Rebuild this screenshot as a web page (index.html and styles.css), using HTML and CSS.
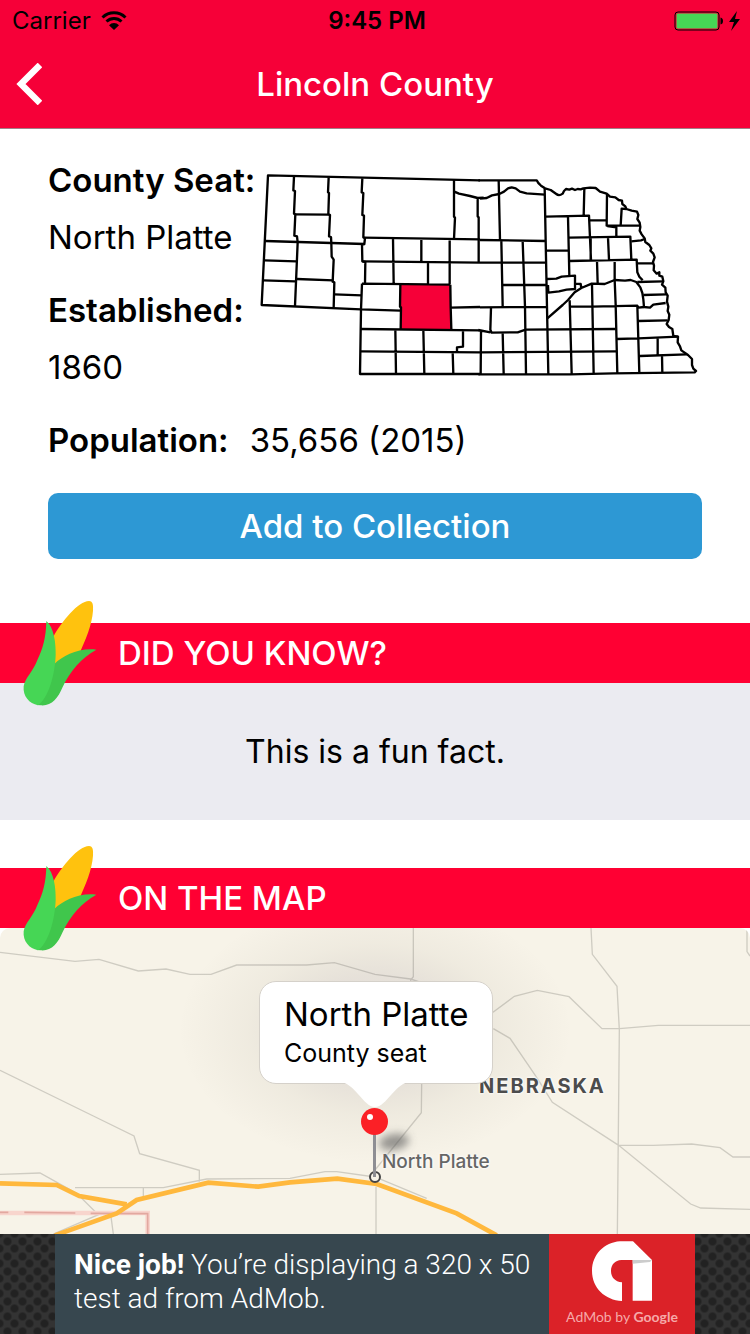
FILE: index.html
```html
<!DOCTYPE html>
<html lang="en">
<head>
  <meta charset="utf-8">
  <meta name="viewport" content="width=device-width">
  <title>Lincoln County</title>
  <link rel="stylesheet" href="styles.css">
</head>
<body>
  <svg class="defs" aria-hidden="true">
    <symbol id="corn" viewBox="66 30 225 318">
      <path fill="#ffc20e" d="M160 140C185 95 235 33 267 33C279 34 280 45 279 62C276 105 256 150 242 182L210 235L150 250Z"/>
      <path fill="#40c64c" d="M110 345C130 300 148 245 163 222C190 197 235 173 289 179C245 203 211 242 188 291C174 325 154 349 122 346Z"/>
      <path fill="#46d655" d="M139 93C162 112 168 160 167 195C165 255 145 325 114 346C88 341 68 319 71 289C76 262 99 246 113 208C128 175 138 145 139 93Z"/>
    </symbol>
  </svg>

  <header class="header">
    <div class="status-bar">
      <div class="carrier">
        <span>Carrier</span>
        <svg class="wifi" viewBox="0 0 26 20" aria-hidden="true">
          <path d="M1.500 6.500A16.500 16.500 0 0 1 24.500 6.500M5.500 10.500A11 11 0 0 1 20.500 10.500" fill="none" stroke="#000" stroke-width="3"/>
          <path d="M8 14.200A7 7 0 0 1 18 14.200L13 19Z"/>
        </svg>
      </div>
      <span class="time">9:45 PM</span>
      <div class="battery">
        <svg viewBox="0 0 68 20" width="68" height="20" aria-hidden="true">
          <rect x="1" y="1" width="44" height="18" rx="3" fill="none" stroke="#000"/>
          <rect x="2.500" y="2.500" width="41" height="15" rx="1" fill="#46d655"/>
          <path d="M46.500 6.500Q49 7 49 10T46.500 13.500Z"/>
          <path d="M63 0L55 11H60L57 20L66 8H61Z"/>
        </svg>
      </div>
    </div>
    <nav class="nav-bar">
      <button class="back" type="button" aria-label="Back">
        <svg viewBox="0 0 26 42" width="26" height="42" aria-hidden="true">
          <path d="M24 2L5 21L24 40" fill="none" stroke="#fff" stroke-width="6.500"/>
        </svg>
      </button>
      <h1>Lincoln County</h1>
    </nav>
  </header>

  <main>
    <section class="info">
      <div class="info-top">
        <dl class="facts">
          <dt>County Seat:</dt>
          <dd>North Platte</dd>
          <dt>Established:</dt>
          <dd>1860</dd>
        </dl>
        <svg class="state-map" viewBox="9 -15 1332 660" role="img" aria-label="Lincoln County in Nebraska">
          <path class="selected" d="M436 359H586L588 492H437Z"/>
          <g class="borders">
            <!-- west -->
            <path d="M675 46L39 31L20 420L318 433L315 627H675"/>
            <path d="M117 35L115 76L120 78L117 146L121 148L118 212L126 214L128 232L120 423"/>
            <path d="M221 37L219 82L222 84L220 147L225 150L222 214L228 216L229 235L230 275L236 284L233 350L238 352L236 428"/>
            <path d="M322 40L320 82L325 84L322 150L327 152L325 217L330 219L328 237L321 238L322 289L331 291L330 356"/>
            <path d="M121 148L222 149M31 228L328 237M28 286L124 289M25 346L121 349M126 342L235 346M238 388L320 391"/>
            <path d="M325 218L675 223M322 289L675 293M414 220L416 355M499 222V292M584 223L584 358M519 293V357M321 356L586 359M321 356L318 433L436 437"/>
            <path d="M436 359L435 425L438 427L437 492M586 359L587 427L589 492M587 428L675 426"/>
            <path d="M318 492L675 496M318 559L675 562M421 493L423 627M505 494L508 627M593 562L595 627M624 495V545L606 547V562"/>
            <path d="M597 45V155L600 158L597 222M598 80L612 86L645 93L668 99L686 98M668 99V154L671 157V293"/>
          </g>
          <g class="borders" transform="translate(675 0)">
            <!-- east -->
            <path d="M-5 46H170Q174 55 183 62L195 70L212 75L229 87Q237 94 248 86L252 78L258 72L268 74L276 71L285 75L293 72L302 73L310 70L330 68L347 69L360 80L380 86L390 95L406 97L416 105L426 107L427 117L436 124L439 132L455 137L471 140L475 150L472 162L479 173L481 186L479 197L485 208L494 220L496 231L508 240L514 250L511 257L520 266L524 277L519 291L522 302L521 316L530 326L538 322L538 332L547 335L550 349L546 359L556 368L557 382L563 392L561 410L565 425L563 438L568 449L566 465L560 477L567 486L577 492L580 513L594 515L593 532L600 544L604 556L624 570L636 582L636 600L640 611L648 618L644 622L400 625L270 628H-5"/>
            <path d="M0 101L20 99L36 91L58 87L72 80L84 70L95 67L107 70L120 80L140 85L195 89"/>
            <path d="M56 46L60 225M194 70L197 227L205 627M0 225L197 228M0 293L199 293M64 227L68 424M128 229L135 425L138 627M68 360L202 360M0 427L201 426"/>
            <path d="M33 428L31 494L35 503L113 502L137 494L407 492M-5 495L31 502M0 562L409 559M3 500L2 627M68 503L71 627"/>
            <path d="M198 155L327 152L333 285M313 71L311 152M264 155L268 330M330 166H381M381 87L380 182L480 182M382 183L409 187V215M267 218L451 215L454 284M332 220V285M384 217L387 284M199 257L264 256M268 288L470 284L472 322L478 335L488 346M351 288L353 355M404 286L404 345"/>
            <path d="M422 181L425 131L439 132M454 229L483 226L494 222M472 295H520M472 351L549 349M490 390L560 388"/>
            <path d="M201 342L229 341L245 335L285 332V372L260 374L237 379L205 383L204 360M285 356L302 357L304 369M202 460L248 420L264 405L284 382L304 369L335 356L374 357L404 345L435 347L452 345L469 351L481 367L487 384L490 403L492 426L510 428L520 419L557 414"/>
            <path d="M269 406L275 627M336 358L341 627M404 345L407 420L412 625M269 424L336 425L472 422L475 428L492 426M472 422L478 625M475 468L563 466M410 522L475 520L594 515M533 519V568M480 573L620 568M546 571L547 624"/>
          </g>
        </svg>
      </div>
      <dl class="population">
        <dt>Population:</dt>
        <dd>35,656 (2015)</dd>
      </dl>
      <button class="btn" type="button">Add to Collection</button>
    </section>

    <section class="panel">
      <div class="panel-title">
        <svg class="corn" aria-hidden="true"><use href="#corn"/></svg>
        <h2>DID YOU KNOW?</h2>
      </div>
      <p class="fun-fact">This is a fun fact.</p>
    </section>

    <section class="panel map-panel">
      <div class="panel-title">
        <svg class="corn" aria-hidden="true"><use href="#corn"/></svg>
        <h2>ON THE MAP</h2>
      </div>
      <div class="map">
        <svg class="roads" viewBox="0 24 2250 918" preserveAspectRatio="xMidYMid slice" aria-hidden="true">
          <defs>
            <radialGradient id="glow">
              <stop offset="0.400" stop-color="#5a4a60" stop-opacity="0.110"/>
              <stop offset="0.650" stop-color="#5a5040" stop-opacity="0.050"/>
              <stop offset="1" stop-color="#5a5040" stop-opacity="0"/>
            </radialGradient>
          </defs>
          <g class="minor">
            <path d="M0 97L225 124L297 118L415 153L498 147L570 163H633L710 135H920L1003 128L1125 163L1232 177L1300 200L1480 276L1543 229L1612 211L1707 230L1806 326H1858L1975 316H2250"/>
            <path d="M0 451L280 588L402 648L419 701L598 751V785M0 763L120 759L230 820L295 884L160 942M225 803H490L620 777L870 775L975 755H1010L1125 771L1280 835"/>
            <path d="M430 803V838M333 890L340 942M1240 24V170L1232 180L1266 400L1264 578L1125 750M1128 800V942"/>
            <path d="M1480 326L1530 355L1612 475L1657 547L1856 676L2072 852L2102 864L2250 868M1773 24L1777 103L1851 199L1858 330L1852 942M1856 676H1960L2075 672L2160 683L2199 711H2250M2241 24V95L2250 108"/>
          </g>
          <path class="park" d="M0 879H443V942"/>
          <path class="park-line" d="M0 877H25M73 877L226 879M272 880L443 881V942"/>
          <path class="highway" d="M0 790L170 795L238 828L380 853M165 946L350 880L410 840L625 788L775 800L870 787L1012 776L1130 792L1370 880L1490 946"/>
          <ellipse cx="1125" cy="330" rx="590" ry="400" fill="url(#glow)"/>
        </svg>
        <span class="state-name">NEBRASKA</span>
        <span class="city-name">North Platte</span>
        <svg class="pin" viewBox="0 0 160 130" aria-hidden="true">
          <filter id="pin-blur" x="-50%" y="-100%" width="200%" height="300%"><feGaussianBlur stdDeviation="4"/></filter>
          <ellipse cx="54" cy="72" rx="15" ry="8" fill="#555" fill-opacity="0.600" filter="url(#pin-blur)" transform="rotate(-10 54 72)"/>
          <circle cx="35" cy="107" r="5" fill="#f7f3e8" stroke="#444" stroke-width="2"/>
          <path d="M34.500 60V107" stroke="#8e8e93" stroke-width="3"/>
          <circle cx="34.500" cy="51.500" r="13.500" fill="#fb2026"/>
          <circle cx="30" cy="47" r="3" fill="#fff"/>
        </svg>
        <div class="callout">
          <strong>North Platte</strong>
          <span>County seat</span>
          <svg class="callout-tip" viewBox="0 0 72 26" aria-hidden="true">
            <path d="M0 0C16 0 24 25 36 25S56 0 72 0Z" fill="#fff"/>
          </svg>
        </div>
      </div>
    </section>
  </main>

  <footer class="ad">
    <a class="ad-link" href="#">
      <span class="ad-text"><b>Nice job!</b> You’re displaying a 320 x 50 test ad from AdMob.</span>
      <span class="ad-logo">
        <svg viewBox="648 60 186 186" width="62" height="62" aria-hidden="true">
          <path fill="#fff" d="M774 64H735C688 67 651 104 651 152C651 204 690 240 741 243V187C720 185 708 172 708 153C708 134 720 121 739 120H773V242H831V120Z"/>
          <path fill="#ccc" d="M773 120H831L825 126L773 131Z"/>
        </svg>
        <span class="ad-brand">AdMob by <b>Google</b></span>
      </span>
    </a>
  </footer>
</body>
</html>
```
FILE: styles.css
```css
* {
  box-sizing: border-box;
}

body {
  display: flex;
  flex-direction: column;
  min-height: 100vh;
  margin: 0;
  background-color: #fff;
  color: #000;
  font-family: Inter, Roboto, sans-serif;
  font-size: 33px;
  line-height: 41px;
}

h1, h2, p, dl, dd {
  margin: 0;
}

button {
  border: none;
  font-family: inherit;
  cursor: pointer;
}

.defs {
  position: absolute;
  width: 0;
  height: 0;
}

/* header */
.header {
  background-color: #f60038;
  border-bottom: 1px solid #a08088;
}

.status-bar {
  display: grid;
  grid-template-columns: 1fr auto 1fr;
  align-items: center;
  height: 40px;
  padding: 0 8px 0 12px;
  font-size: 24px;
}

.carrier {
  display: flex;
  align-items: center;
  gap: 10px;
}

.wifi {
  width: 26px;
  height: 20px;
}

.time {
  font-weight: 600;
}

.battery {
  display: flex;
  justify-content: flex-end;
}

.nav-bar {
  display: grid;
  grid-template-columns: 60px 1fr 60px;
  align-items: center;
  height: 88px;
}

.nav-bar h1 {
  font-size: 33px;
  font-weight: 500;
  color: #fff;
  text-align: center;
}

.back {
  display: flex;
  padding: 0 0 0 16px;
  background: none;
}

/* county info */
.info {
  padding: 31px 48px 64px;
}

.info-top {
  display: grid;
  grid-template-columns: 210px 1fr;
}

dt {
  font-weight: 600;
  white-space: nowrap;
}

.facts dt {
  margin-bottom: 16px;
}

.facts dd {
  margin-bottom: 32px;
}

.state-map {
  width: 100%;
}

.borders {
  fill: none;
  stroke: #000;
  stroke-width: 7;
  stroke-linejoin: round;
}

.selected {
  fill: #f60038;
}

.population {
  display: flex;
  gap: 21px;
  margin-bottom: 32px;
}

.btn {
  display: block;
  width: 100%;
  height: 66px;
  background-color: #2d98d4;
  color: #fff;
  border-radius: 10px;
  font-size: 33px;
  font-weight: 500;
}

/* red title panels */
.panel-title {
  position: relative;
  z-index: 1;
  display: flex;
  align-items: center;
  height: 60px;
  padding-left: 118px;
  background-color: #ff0033;
  color: #fff;
}

.panel-title h2 {
  font-size: 33px;
  font-weight: 500;
}

.corn {
  position: absolute;
  left: 22px;
  top: -23px;
  width: 75px;
  height: 106px;
}

.fun-fact {
  padding: 48px;
  margin-bottom: 48px;
  background-color: #ebebf1;
  font-size: 32px;
  text-align: center;
}

/* map */
main, .map-panel {
  display: flex;
  flex-direction: column;
  flex: 1;
}

.map {
  position: relative;
  flex: 1;
  min-height: 306px;
  overflow: hidden;
  background-color: #f7f3e8;
  border-radius: 10px 10px 0 0;
}

.roads {
  position: absolute;
  width: 100%;
  height: 100%;
}

.roads path {
  fill: none;
}

.minor {
  stroke: #cfccc2;
  stroke-width: 4;
}

.highway {
  stroke: #ffb83d;
  stroke-width: 14;
}

.park {
  stroke: #f8d5cd;
  stroke-width: 14;
}

.park-line {
  stroke: #e2a8a0;
  stroke-width: 5;
}

.state-name, .city-name {
  position: absolute;
  left: 50%;
  font-size: 20px;
  line-height: 24px;
  text-shadow: 0 0 3px #fff, 0 0 3px #fff;
}

.state-name {
  top: 146px;
  margin-left: 104px;
  color: #4c4c4c;
  font-weight: 700;
  letter-spacing: 2px;
}

.city-name {
  top: 222px;
  margin-left: 7px;
  color: #666;
  font-size: 19px;
  font-weight: 500;
}

.pin {
  position: absolute;
  left: 50%;
  top: 142px;
  width: 160px;
  height: 130px;
  margin-left: -35px;
}

.callout {
  position: absolute;
  left: 50%;
  top: 53px;
  display: flex;
  flex-direction: column;
  width: 234px;
  height: 103px;
  margin-left: -116px;
  padding: 12px 24px;
  background-color: #fff;
  border: 1px solid #d5d1ca;
  border-radius: 17px;
  white-space: nowrap;
}

.callout strong {
  font-size: 33px;
  font-weight: 400;
}

.callout span {
  font-size: 25px;
  line-height: 36px;
}

.callout-tip {
  position: absolute;
  left: 79px;
  top: 100px;
  width: 72px;
  height: 26px;
}

/* ad banner */
.ad {
  display: flex;
  justify-content: center;
  background-color: #333;
  background-image:
    radial-gradient(circle, #222 3px, transparent 5px),
    radial-gradient(circle, #222 3px, transparent 5px);
  background-size: 15px 15px;
  background-position: 0 0, 7px 7px;
}

.ad-link {
  display: flex;
  width: 640px;
  height: 100px;
  color: #fff;
  font-family: Roboto, sans-serif;
  text-decoration: none;
}

.ad-text {
  flex: 1;
  padding: 14px 12px 0 19px;
  background-color: #37474f;
  font-size: 28px;
  font-weight: 300;
  line-height: 34px;
}

.ad-text b {
  font-weight: 700;
}

.ad-logo {
  display: flex;
  flex-direction: column;
  align-items: center;
  width: 146px;
  padding-top: 6px;
  background-color: #db2228;
}

.ad-brand {
  color: #f6a9a9;
  font-family: Lato, sans-serif;
  font-size: 14px;
  line-height: 30px;
}

.ad-brand b {
  font-weight: 700;
}
```
